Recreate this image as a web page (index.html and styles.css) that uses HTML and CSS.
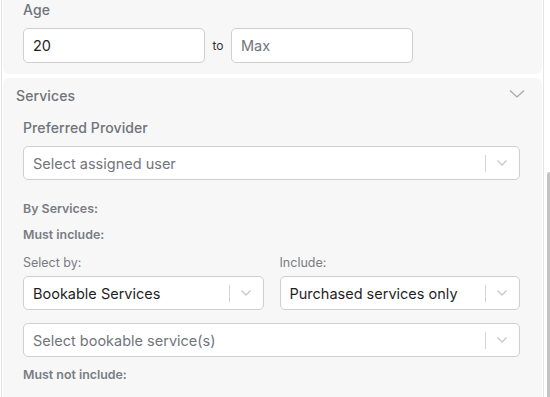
FILE: index.html
```html
<!DOCTYPE html>
<html lang="en">
<head>
    <meta charset="UTF-8">
    <meta name="viewport" content="width=device-width, initial-scale=1.0">
    <title>Filters</title>
    <link rel="stylesheet" href="styles.css">
</head>
<body>
    <div class="panel">
        <!-- Age -->
        <section class="card card-top">
            <div class="label">Age</div>
            <div class="range-row">
                <div class="input"><span class="value">20</span></div>
                <span class="to">to</span>
                <div class="input"><span class="placeholder">Max</span></div>
            </div>
        </section>

        <!-- Services -->
        <section class="card">
            <div class="card-header">
                <span class="card-title">Services</span>
                <svg class="header-chevron" width="16" height="10" viewBox="0 0 16 10">
                    <path d="M1 1.5 L8 8 L15 1.5" fill="none" stroke="#a3a6ab" stroke-width="1.2"/>
                </svg>
            </div>
            <div class="card-body">
                <div class="label">Preferred Provider</div>
                <div class="select">
                    <span class="placeholder">Select assigned user</span>
                    <span class="sep"></span>
                    <svg class="chevron" width="12" height="8" viewBox="0 0 12 8"><path d="M1.5 1.5 L6 6 L10.5 1.5" fill="none" stroke="#c8c8c8" stroke-width="1.3"/></svg>
                </div>

                <div class="small-bold by-services">By Services:</div>
                <div class="small-bold must-include">Must include:</div>

                <div class="two-col">
                    <div>
                        <div class="small-label">Select by:</div>
                        <div class="select">
                            <span class="value">Bookable Services</span>
                            <span class="sep"></span>
                            <svg class="chevron" width="12" height="8" viewBox="0 0 12 8"><path d="M1.5 1.5 L6 6 L10.5 1.5" fill="none" stroke="#c8c8c8" stroke-width="1.3"/></svg>
                        </div>
                    </div>
                    <div>
                        <div class="small-label">Include:</div>
                        <div class="select">
                            <span class="value">Purchased services only</span>
                            <span class="sep"></span>
                            <svg class="chevron" width="12" height="8" viewBox="0 0 12 8"><path d="M1.5 1.5 L6 6 L10.5 1.5" fill="none" stroke="#c8c8c8" stroke-width="1.3"/></svg>
                        </div>
                    </div>
                </div>

                <div class="select service-select">
                    <span class="placeholder">Select bookable service(s)</span>
                    <span class="sep"></span>
                    <svg class="chevron" width="12" height="8" viewBox="0 0 12 8"><path d="M1.5 1.5 L6 6 L10.5 1.5" fill="none" stroke="#c8c8c8" stroke-width="1.3"/></svg>
                </div>

                <div class="small-bold must-not">Must not include:</div>
            </div>
        </section>
    </div>

    <!-- Scrollbar -->
    <div class="scrollbar">
        <div class="thumb"></div>
    </div>
</body>
</html>
```

FILE: styles.css
```css
html, body {
    margin: 0;
    padding: 0;
    height: 100%;
    overflow: hidden;
}
body {
    font-family: Inter, "Noto Sans", Arial, sans-serif;
    background: #ffffff;
    display: flex;
    align-items: stretch;
}
.panel {
    width: 541px;
    margin-left: 1px;
    border-left: 1px solid #e3e3e3;
    border-right: 1px solid #e6e6e6;
    display: flex;
    flex-direction: column;
    gap: 4px;
}
.card {
    background: #f7f7f7;
    margin-left: 1px;
    width: 539px;
    border-radius: 6px;
    box-sizing: border-box;
}
.card-top {
    border-radius: 0 0 6px 6px;
    padding: 0 20px 11px 20px;
}
.label {
    font-size: 14px;
    font-weight: 500;
    line-height: 20px;
    letter-spacing: 0.1px;
    color: #6f737a;
}
.card-top .label {
    margin-bottom: 8px;
}
.range-row {
    display: flex;
    align-items: center;
}
.input {
    width: 182px;
    height: 35px;
    box-sizing: border-box;
    border: 1px solid #cfcfcf;
    border-radius: 5px;
    background: #fff;
    display: flex;
    align-items: center;
    padding-left: 9px;
    font-size: 14.5px;
}
.to {
    font-size: 12px;
    color: #333;
    width: 26px;
    text-align: center;
}
.value {
    color: #1f1f1f;
}
.placeholder {
    color: #72757b;
}
.card-header {
    display: flex;
    justify-content: space-between;
    align-items: center;
    padding: 8px 17px 0 13px;
    height: 28px;
    box-sizing: border-box;
}
.card-title {
    font-size: 14px;
    font-weight: 500;
    color: #6f737a;
    line-height: 20px;
    letter-spacing: 0.1px;
}
.header-chevron {
    margin-top: -4px;
}
.card-body {
    padding: 12px 22px 20px 20px;
}
.card-body > .label {
    margin-bottom: 8px;
}
.select {
    height: 34px;
    box-sizing: border-box;
    border: 1px solid #cfcfcf;
    border-radius: 5px;
    background: #fff;
    display: flex;
    align-items: center;
    padding-left: 9px;
    font-size: 14.5px;
}
.select > span:first-child {
    flex: 1;
    white-space: nowrap;
    overflow: hidden;
}
.sep {
    width: 1px;
    height: 17px;
    background: #d4d4d4;
}
.chevron {
    margin: 0 11px 0 10px;
}
.small-bold {
    font-size: 12.4px;
    font-weight: 600;
    line-height: 18px;
    color: #797d83;
}
.by-services {
    margin-top: 20px;
}
.must-include {
    margin-top: 8px;
}
.small-label {
    font-size: 12.5px;
    line-height: 18px;
    color: #797d83;
    margin-top: 10px;
    margin-bottom: 4px;
}
.two-col {
    display: grid;
    grid-template-columns: 1fr 1fr;
    gap: 16px;
}
.service-select {
    margin-top: 13px;
}
.must-not {
    margin-top: 9px;
}
.scrollbar {
    flex: 1;
    display: flex;
    flex-direction: column;
    justify-content: flex-end;
    padding-left: 3px;
}
.thumb {
    height: 225px;
    background: #c3c3c3;
    border-radius: 3px 0 0 0;
}
```
